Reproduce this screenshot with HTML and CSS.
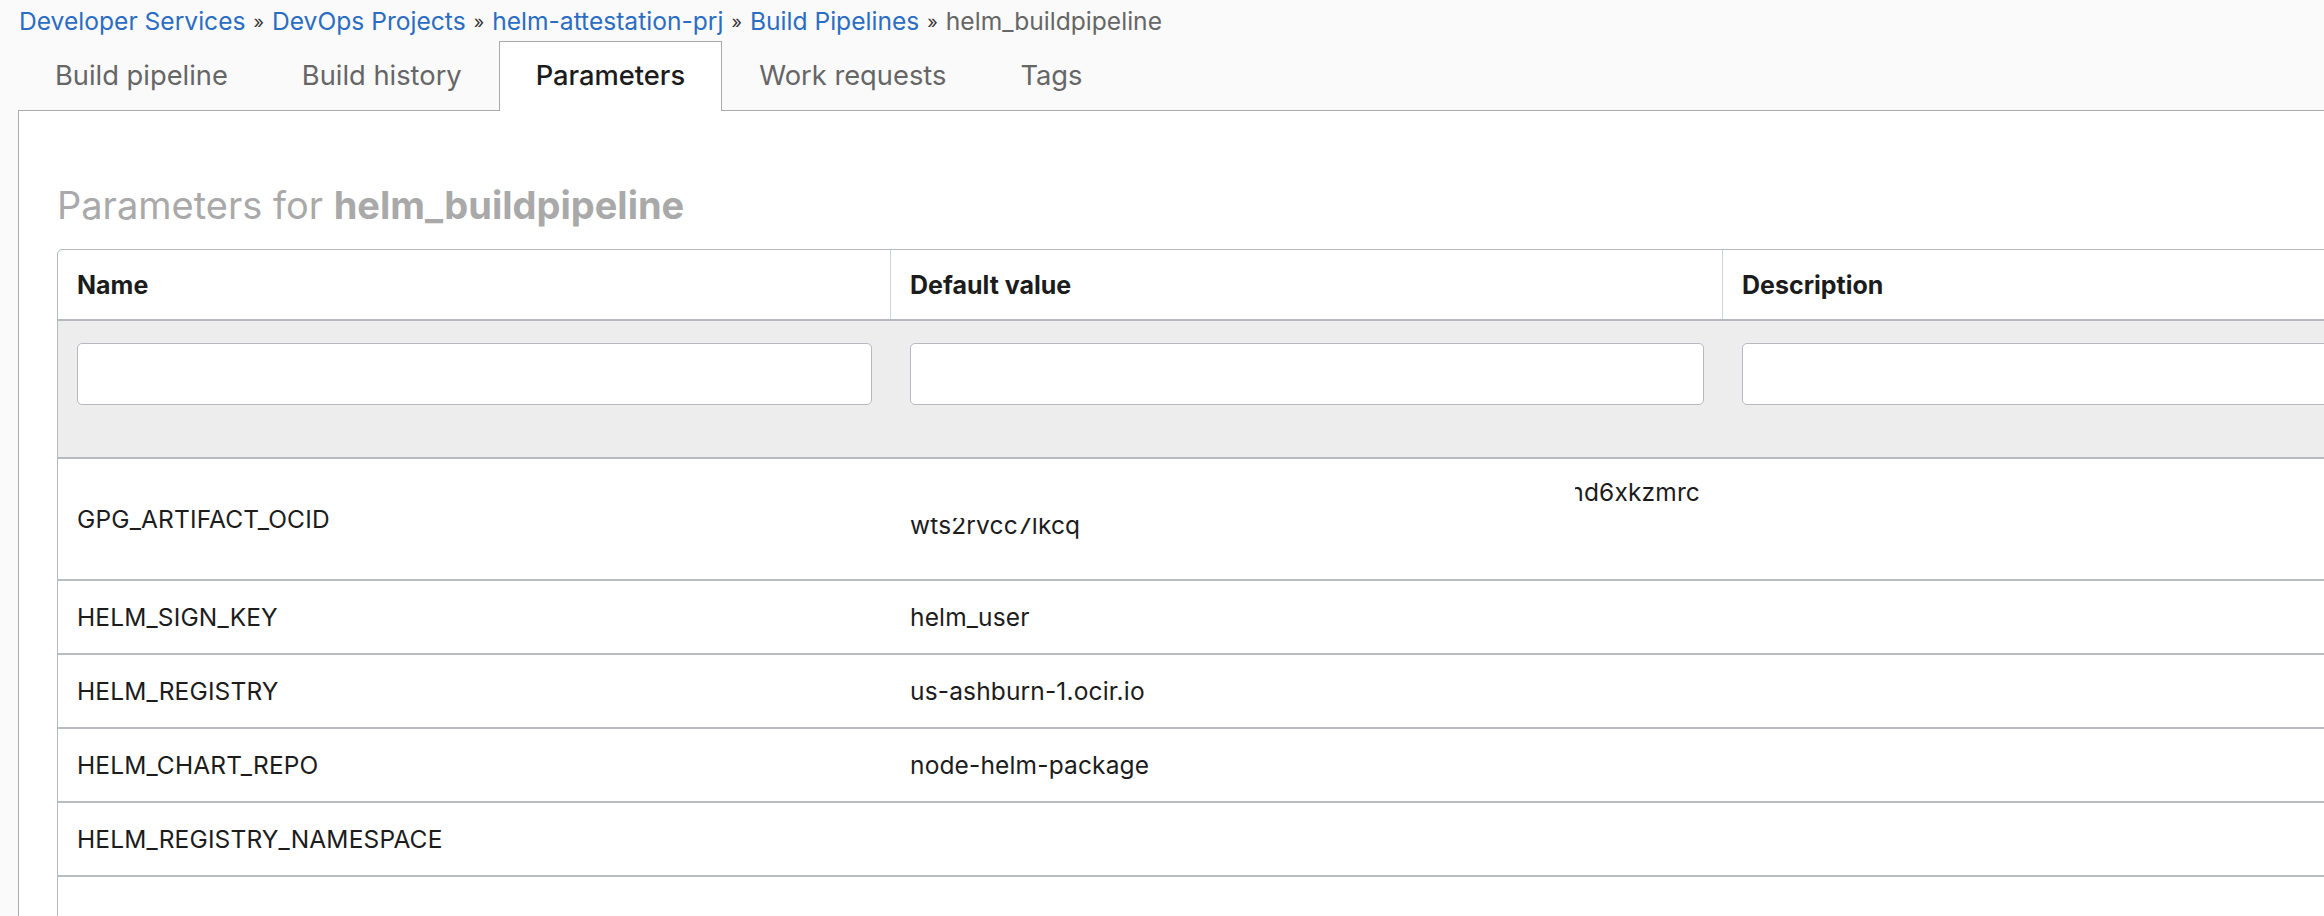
FILE: index.html
```html
<!DOCTYPE html>
<html lang="en">
<head>
<meta charset="utf-8">
<title>Parameters for helm_buildpipeline</title>
<link rel="stylesheet" href="styles.css">
</head>
<body>
<nav class="breadcrumb">
  <a class="crumb" href="#">Developer Services</a><span class="sep">»</span><a class="crumb" href="#">DevOps Projects</a><span class="sep">»</span><a class="crumb" href="#">helm-attestation-prj</a><span class="sep">»</span><a class="crumb" href="#">Build Pipelines</a><span class="sep">»</span><span class="current">helm_buildpipeline</span>
</nav>
<div class="tabs">
  <div class="tab">Build pipeline</div>
  <div class="tab">Build history</div>
  <div class="tab active">Parameters</div>
  <div class="tab">Work requests</div>
  <div class="tab">Tags</div>
</div>
<main class="panel">
  <h1 class="title">Parameters for <strong>helm_buildpipeline</strong></h1>
  <div class="grid">
    <div class="row head">
      <div class="cell">Name</div>
      <div class="cell">Default value</div>
      <div class="cell">Description</div>
    </div>
    <div class="row filters">
      <div class="cell"><input class="filter" type="text" aria-label="Filter name"></div>
      <div class="cell"><input class="filter" type="text" aria-label="Filter default value"></div>
      <div class="cell"><input class="filter" type="text" aria-label="Filter description"></div>
    </div>
    <div class="row data tall">
      <div class="cell">GPG_ARTIFACT_OCID</div>
      <div class="cell value-wrap">
        <div class="line line-end">nd6xkzmrc</div>
        <div class="line">wts2rvcc7lkcq</div>
        <div class="redact"></div>
      </div>
      <div class="cell"></div>
    </div>
    <div class="row data">
      <div class="cell">HELM_SIGN_KEY</div>
      <div class="cell">helm_user</div>
      <div class="cell"></div>
    </div>
    <div class="row data">
      <div class="cell">HELM_REGISTRY</div>
      <div class="cell">us-ashburn-1.ocir.io</div>
      <div class="cell"></div>
    </div>
    <div class="row data">
      <div class="cell">HELM_CHART_REPO</div>
      <div class="cell">node-helm-package</div>
      <div class="cell"></div>
    </div>
    <div class="row data">
      <div class="cell">HELM_REGISTRY_NAMESPACE</div>
      <div class="cell"></div>
      <div class="cell"></div>
    </div>
    <div class="row data">
      <div class="cell"></div>
      <div class="cell"></div>
      <div class="cell"></div>
    </div>
  </div>
</main>
</body>
</html>
```

FILE: styles.css
```css
* { box-sizing: border-box; }

html, body {
  margin: 0;
  padding: 0;
}

body {
  background: #fafafa;
  font-family: Inter, "Noto Sans", "Liberation Sans", sans-serif;
  color: #1c1c1c;
  overflow: hidden;
  height: 916px;
}

.breadcrumb {
  height: 42px;
  padding-left: 19px;
  font-size: 24.6px;
  line-height: 42px;
  white-space: nowrap;
}

.crumb {
  color: #2b6dc3;
  text-decoration: none;
}

.sep {
  color: #333;
  font-size: 18px;
  margin: 0 8px;
  position: relative;
  top: -2px;
}

.current {
  color: #666;
}

.tabs {
  display: flex;
  align-items: flex-end;
  margin-left: 18px;
  height: 69px;
  border-bottom: 1px solid #aaaaaa;
}

.tab {
  height: 68px;
  padding: 0 36px;
  border: 1px solid transparent;
  border-bottom: none;
  font-size: 27.3px;
  line-height: 66px;
  color: #666;
  white-space: nowrap;
}

.tab.active {
  height: 70px;
  margin-bottom: -1px;
  background: #fff;
  border-color: #aaaaaa;
  color: #1c1c1c;
  font-weight: 500;
  line-height: 68px;
}

.panel {
  margin-left: 18px;
  border-left: 1px solid #aaaaaa;
  background: #fff;
  height: 805px;
  padding: 71px 0 0 38px;
}

.title {
  margin: 0 0 21px;
  font-size: 38px;
  line-height: 46px;
  font-weight: 400;
  color: #a9a9a9;
  white-space: nowrap;
}

.title strong {
  font-weight: 700;
}

.grid {
  width: 2500px;
  border: 1px solid #b6bac0;
  border-radius: 5px;
}

.row {
  display: grid;
  grid-template-columns: 833px 832px 1fr;
}

.cell {
  display: flex;
  align-items: center;
  padding: 0 19px;
  font-size: 24.5px;
  letter-spacing: 0.15px;
  color: #1c1c1c;
  white-space: nowrap;
}

.head {
  height: 71px;
  border-bottom: 2px solid #b6bac0;
}

.head .cell {
  font-weight: 700;
  font-size: 25px;
  letter-spacing: 0;
  border-right: 1px solid #cfd2d6;
}

.filters {
  background: #ededed;
  padding: 22px 0 52px;
  border-bottom: 2px solid #b6bac0;
}

.filter {
  display: block;
  width: 100%;
  height: 62px;
  border: 1px solid #b6bac0;
  border-radius: 5px;
  background: #fff;
  font: inherit;
}

.data {
  height: 74px;
  border-bottom: 2px solid #b9bdc3;
}

.data.tall {
  height: 122px;
}

.value-wrap {
  position: relative;
  display: block;
  padding-top: 17px;
}

.line {
  line-height: 33px;
}

.line-end {
  text-align: right;
  padding-right: 4px;
}

.redact {
  position: absolute;
  left: 0;
  top: 0;
  width: 684px;
  height: 59px;
  background: #fff;
}
```
